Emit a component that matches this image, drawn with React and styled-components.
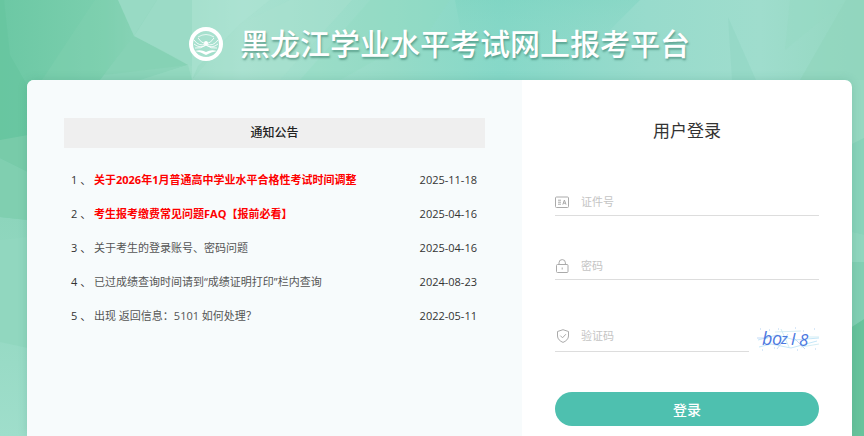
import React, { useState } from 'react';
import styled, { createGlobalStyle } from 'styled-components';

const GlobalStyle = createGlobalStyle`
  * {
    box-sizing: border-box;
  }
  html, body, #root {
    height: 100%;
  }
  body {
    margin: 0;
    background: #9cdcc8;
    font-family: "Open Sans", "Noto Sans CJK SC", sans-serif;
  }
`;

const notices = [
  { title: '关于2026年1月普通高中学业水平合格性考试时间调整', date: '2025-11-18', important: true },
  { title: '考生报考缴费常见问题FAQ【报前必看】', date: '2025-04-16', important: true },
  { title: '关于考生的登录账号、密码问题', date: '2025-04-16' },
  { title: '已过成绩查询时间请到“成绩证明打印”栏内查询', date: '2024-08-23' },
  { title: '出现 返回信息：5101 如何处理？', date: '2022-05-11' },
];

const Background = () => (
  <Backdrop viewBox="0 0 864 436" preserveAspectRatio="xMidYMid slice" aria-hidden="true">
    <defs>
      <linearGradient id="base" x1="0" x2="1" y1="0" y2="0">
        <stop offset="0" stopColor="#6cc8a4" />
        <stop offset="0.12" stopColor="#7bcfae" />
        <stop offset="0.22" stopColor="#9ddcc6" />
        <stop offset="0.28" stopColor="#a9e1d0" />
        <stop offset="0.45" stopColor="#96dbc7" />
        <stop offset="0.58" stopColor="#86d8c8" />
        <stop offset="0.75" stopColor="#98dbcc" />
        <stop offset="0.88" stopColor="#9fddcd" />
        <stop offset="1" stopColor="#93d7bf" />
      </linearGradient>
      <linearGradient id="lighten" x1="0" x2="0" y1="0" y2="1">
        <stop offset="0" stopColor="#8dd5bc" />
        <stop offset="1" stopColor="#9fdecb" />
      </linearGradient>
      <linearGradient id="glow" x1="0" x2="0" y1="0" y2="1">
        <stop offset="0" stopColor="#78d2be" />
        <stop offset="1" stopColor="#8edac9" stopOpacity="0" />
      </linearGradient>
    </defs>
    <rect width="864" height="436" fill="url(#base)" />
    <path d="M0 0H4L10 55L30 90V145H0Z" fill="#66c49f" opacity="0.6" />
    <path d="M95 0H118L134 36L100 80H42Z" fill="#83d2b3" opacity="0.35" />
    <path d="M134 36L188 65L140 80H100Z" fill="#8bd4b9" />
    <path d="M134 36L188 65L104 75Z" fill="#84d0b3" opacity="0.6" />
    <path d="M188 65L192 80H140Z" fill="#93d8bf" />
    <path d="M118 0H157L134 36Z" fill="#98dac4" />
    <path d="M157 0H192V66L134 36Z" fill="#9bdbc6" />
    <path d="M192 0H270L240 24L198 66L192 80Z" fill="#aee3d4" opacity="0.5" />
    <path d="M192 80L240 24L290 0H352L280 80Z" fill="#a9e1d0" opacity="0.4" />
    <path d="M370 0H450L430 30L340 80H300Z" fill="#90d9c1" opacity="0.3" />
    <path d="M455 0H640L560 80H470Z" fill="url(#glow)" opacity="0.4" />
    <path d="M728 17L756 80H732Z" fill="#8fd6c2" opacity="0.55" />
    <path d="M790 0H846L785 50Z" fill="#96d9c3" opacity="0.5" />
    <path d="M846 0H864V80H800Z" fill="#91d6bd" opacity="0.7" />
    <path d="M0 140L28 135V172L0 158Z" fill="#78cba9" />
    <path d="M0 158L28 172V220L0 217Z" fill="#80cfb0" />
    <path d="M0 217L28 220V436H0Z" fill="url(#lighten)" />
    <path d="M0 240L28 237V348L0 342Z" fill="#91d7bf" />
    <path d="M850 80H864V138L850 145Z" fill="#96d8c1" />
    <path d="M850 145L864 138V235L850 232Z" fill="#89d3ba" />
    <path d="M850 232L864 235V262H850Z" fill="#90d6be" />
    <path d="M850 262H864V319L850 328Z" fill="#82cfb3" />
    <path d="M850 328L864 319V436H850Z" fill="#67c39c" />
  </Backdrop>
);

const Emblem = () => (
  <Logo viewBox="0 0 34 34" aria-hidden="true">
    <circle cx="17" cy="17" r="15" fill="none" stroke="#fff" strokeWidth="4" />
    <path d="M9 10Q17 5 25 10" fill="none" stroke="#fff" strokeWidth="1" opacity="0.7" />
    <path
      d="M5 13Q10 20 17 17Q24 20 29 13M5 17Q11 22 17 18Q23 22 29 17M6 21Q12 22 17 18Q22 22 28 21M9 11Q12 16 17 17Q22 16 25 11"
      fill="none"
      stroke="#fff"
      strokeWidth="1"
      opacity="0.85"
    />
    <circle cx="17" cy="16" r="2" fill="#fff" />
    <path d="M6 24Q12 22 17 25Q22 22 28 24Q22 25 17 28Q12 25 6 24Z" fill="#fff" />
  </Logo>
);

const IdIcon = () => (
  <Icon viewBox="0 0 14 14">
    <rect x="0.5" y="2" width="13" height="10.5" rx="1" />
    <path d="M3 5.2H6M3 7.2H6M3 9.2H6M7.8 9.6L9.4 5L11 9.6M8.3 8.2H10.5" />
  </Icon>
);

const LockIcon = () => (
  <Icon viewBox="0 0 14 14">
    <rect x="1.5" y="5.5" width="11.5" height="8" rx="1" />
    <path d="M4 5.5V3.8A3.2 3.2 0 0 1 10.4 3.8V5.5M7.2 8.5V10.5" />
  </Icon>
);

const ShieldIcon = () => (
  <Icon viewBox="0 0 14 14">
    <path d="M8 0.7L13.5 2.5V7C13.5 10 11 12.2 8 13.4C5 12.2 2.5 10 2.5 7V2.5Z" />
    <path d="M5.3 6.6L7.5 8.8L10.9 5.2" />
  </Icon>
);

const Captcha = () => (
  <CaptchaImage viewBox="0 -5 62 30" role="img" aria-label="验证码图片">
    <g fill="none" strokeWidth="0.8">
      <path d="M1 13L20 8L38 13L62 11M2 20L14 17L34 21L60 14" stroke="#b5e0f6" />
      <path d="M24 2L32 20M18 5L44 4M44 20L62 17M52 10H62" stroke="#c8e9f1" />
      <path d="M0 11H11M36 10L48 22M20 22L31 7" stroke="#b4d0f5" />
      <path d="M3 2h1M12 3h1M21 2h1M38 1h1M46 4h1M57 2h1M5 23h1M17 21h1M40 23h1M58 22h1" stroke="#9ec5ef" />
    </g>
    <g fill="#4c78df" fontFamily="Open Sans, sans-serif" fontStyle="italic">
      <text x="5" y="18" fontSize="18">b</text>
      <text x="15" y="18" fontSize="18">o</text>
      <text x="24" y="17" fontSize="15">z</text>
      <text x="34" y="18" fontSize="17">l</text>
      <text x="42" y="19" fontSize="17">8</text>
    </g>
  </CaptchaImage>
);

const App = () => {
  const [form, setForm] = useState({ idNumber: '', password: '', code: '' });

  const handleChange = (e) => setForm({ ...form, [e.target.name]: e.target.value });

  return (
    <Page>
      <GlobalStyle />
      <Background />
      <Header>
        <Emblem />
        <h1>黑龙江学业水平考试网上报考平台</h1>
      </Header>
      <Card>
        <Notices>
          <h2>通知公告</h2>
          <ol>
            {notices.map((item, index) => (
              <Notice key={item.title} $important={item.important}>
                <span>{index + 1} 、</span>
                <a href="#notice">{item.title}</a>
                <time>{item.date}</time>
              </Notice>
            ))}
          </ol>
        </Notices>
        <Login onSubmit={(e) => e.preventDefault()}>
          <h2>用户登录</h2>
          <Field>
            <IdIcon />
            <input name="idNumber" aria-label="证件号" placeholder="证件号" value={form.idNumber} onChange={handleChange} />
          </Field>
          <Field>
            <LockIcon />
            <input name="password" type="password" aria-label="密码" placeholder="密码" value={form.password} onChange={handleChange} />
          </Field>
          <CodeRow>
            <Field $tall>
              <ShieldIcon />
              <input name="code" aria-label="验证码" placeholder="验证码" value={form.code} onChange={handleChange} />
            </Field>
            <Captcha />
          </CodeRow>
          <button type="submit">登录</button>
        </Login>
      </Card>
    </Page>
  );
};

const Page = styled.div`
  min-height: 100%;
  display: flex;
  flex-direction: column;
  padding: 0 12px 0 27px;
  position: relative;
  isolation: isolate;
`;

const Backdrop = styled.svg`
  position: absolute;
  inset: 0;
  width: 100%;
  height: 100%;
  z-index: -1;
`;

const Header = styled.header`
  display: flex;
  align-items: center;
  justify-content: center;
  gap: 17px;
  height: 80px;
  padding-top: 8px;
  h1 {
    margin: 0;
    font-size: 30px;
    line-height: 40px;
    font-weight: 500;
    color: #fff;
    white-space: nowrap;
    text-shadow: 1px 2px 2px rgba(40, 110, 90, .5);
  }
`;

const Logo = styled.svg`
  width: 34px;
  height: 34px;
  flex: none;
`;

const Card = styled.main`
  flex: 1;
  display: grid;
  grid-template-columns: 3fr 2fr;
  background: #fff;
  border-radius: 7px 7px 0 0;
  overflow: hidden;
  box-shadow: 0 0 10px rgba(40, 130, 100, .2);
`;

const Notices = styled.section`
  padding: 38px 37px;
  background: #f7fbfc;
  h2 {
    margin: 0;
    background: #efefef;
    text-align: center;
    font-size: 12px;
    line-height: 30px;
    font-weight: 500;
    color: #222;
  }
  ol {
    margin: 0;
    padding: 14px 8px 14px 7px;
    list-style: none;
  }
`;

const Notice = styled.li`
  display: flex;
  align-items: center;
  height: 34px;
  font-size: 11px;
  color: #333;
  white-space: nowrap;
  span {
    width: 23px;
  }
  a {
    flex: 1;
    text-decoration: none;
    color: ${({ $important }) => ($important ? '#fe0000' : '#555')};
    font-weight: ${({ $important }) => ($important ? 700 : 400)};
  }
`;

const Login = styled.form`
  display: flex;
  flex-direction: column;
  padding: 38px 33px 10px;
  h2 {
    margin: 0 0 44px;
    text-align: center;
    font-size: 17px;
    line-height: 26px;
    font-weight: 400;
    color: #333;
  }
  button {
    height: 34px;
    margin-top: 40px;
    border: 0;
    border-radius: 17px;
    background: #4ec0af;
    color: #fff;
    font-family: inherit;
    font-size: 14px;
    font-weight: 500;
    cursor: pointer;
  }
`;

const Field = styled.label`
  display: flex;
  align-items: center;
  gap: 12px;
  height: ${({ $tall }) => ($tall ? '32px' : '28px')};
  margin-bottom: ${({ $tall }) => ($tall ? '0' : '36px')};
  border-bottom: 1px solid #ddd;
  input {
    flex: 1;
    min-width: 0;
    padding: 0;
    border: 0;
    outline: 0;
    background: none;
    font-family: inherit;
    font-size: 11px;
    color: #444;
  }
  input::placeholder {
    color: #c4c4c4;
  }
`;

const CodeRow = styled.div`
  display: flex;
  align-items: flex-end;
  gap: 8px;
  margin-top: 4px;
  ${Field} {
    flex: 1;
  }
`;

const Icon = styled.svg`
  width: 14px;
  height: 14px;
  flex: none;
  fill: none;
  stroke: #aaa;
  stroke-width: 1;
`;

const CaptchaImage = styled.svg`
  width: 62px;
  height: 30px;
  flex: none;
`;

export default App;
